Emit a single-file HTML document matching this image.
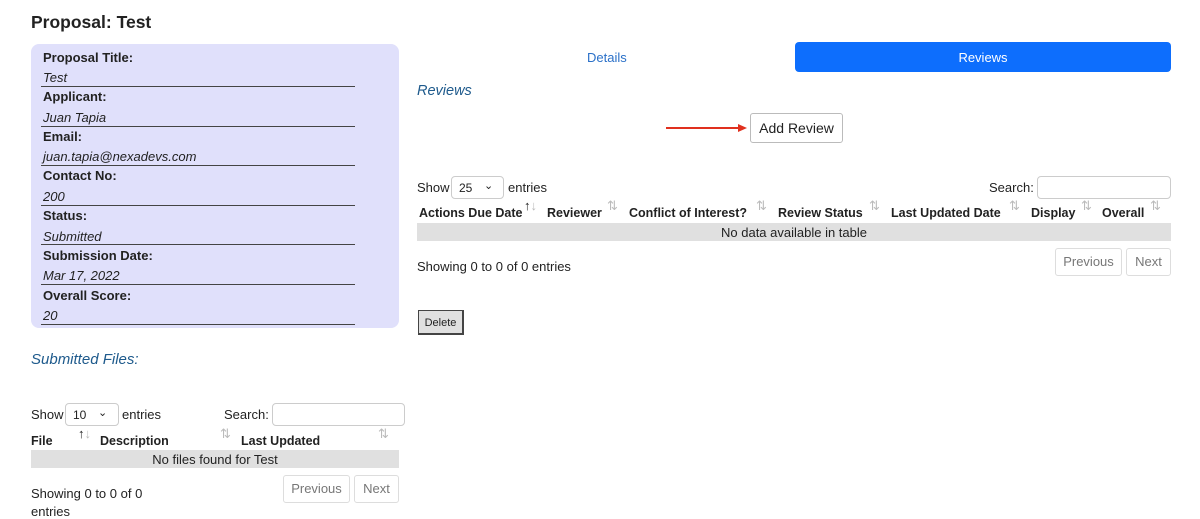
<!DOCTYPE html>
<html><head><style>
body{margin:0;width:1200px;height:514px;overflow:hidden;background:#fff;font-family:"Liberation Sans",sans-serif;color:#222;position:relative;font-size:13px}
.a{position:absolute;white-space:nowrap}
.b{font-weight:bold}
.i{font-style:italic}
.h{font-size:12.5px}
.ln{position:absolute;left:41px;width:314px;height:1px;background:#444}
.inp{position:absolute;border:1px solid #ccc;border-radius:4px;background:#fff;box-sizing:border-box}
.btn{position:absolute;border:1px solid #ddd;border-radius:3px;color:#777;box-sizing:border-box;text-align:center;background:#fff}
.s{color:#bbb;font-size:13px;position:absolute}
</style></head><body>
<div class="a b" style="left:31px;top:12px;font-size:17.5px">Proposal: Test</div>
<div style="position:absolute;left:31px;top:44px;width:368px;height:284px;background:#e0e0fb;border-radius:8px"></div>
<div class="a b" style="left:43px;top:50px">Proposal Title:</div>
<div class="a i" style="left:43px;top:70px">Test</div><div class="ln" style="top:86px"></div>
<div class="a b" style="left:43px;top:89px">Applicant:</div>
<div class="a i" style="left:43px;top:110px">Juan Tapia</div><div class="ln" style="top:126px"></div>
<div class="a b" style="left:43px;top:129px">Email:</div>
<div class="a i" style="left:43px;top:149px">juan.tapia@nexadevs.com</div><div class="ln" style="top:165px"></div>
<div class="a b" style="left:43px;top:168px">Contact No:</div>
<div class="a i" style="left:43px;top:189px">200</div><div class="ln" style="top:205px"></div>
<div class="a b" style="left:43px;top:208px">Status:</div>
<div class="a i" style="left:43px;top:229px">Submitted</div><div class="ln" style="top:244px"></div>
<div class="a b" style="left:43px;top:248px">Submission Date:</div>
<div class="a i" style="left:43px;top:268px">Mar 17, 2022</div><div class="ln" style="top:284px"></div>
<div class="a b" style="left:43px;top:288px">Overall Score:</div>
<div class="a i" style="left:43px;top:308px">20</div><div class="ln" style="top:324px"></div>

<div class="a i" style="left:31px;top:351px;font-size:15px;color:#1e5a8c">Submitted Files:</div>
<div class="a" style="left:31px;top:407px">Show</div>
<div class="inp" style="left:65px;top:403px;width:54px;height:23px"><span class="a" style="left:7px;top:4px;font-size:12px">10</span><span class="a" style="left:32px;top:2px;font-size:11px">⌄</span></div>
<div class="a" style="left:122px;top:407px">entries</div>
<div class="a" style="left:224px;top:407px">Search:</div>
<div class="inp" style="left:272px;top:403px;width:133px;height:23px"></div>
<div class="a b h" style="left:31px;top:434px">File</div>
<div class="a b h" style="left:100px;top:434px">Description</div>
<div class="a b h" style="left:241px;top:434px">Last Updated</div>
<div class="s" style="left:78px;top:426px"><b style="color:#222">↑</b>↓</div>
<div class="s" style="left:220px;top:426px">⇅</div>
<div class="s" style="left:378px;top:426px">⇅</div>
<div style="position:absolute;left:31px;top:450px;width:368px;height:18px;background:#e0e0e0"></div>
<div class="a" style="left:0;width:430px;text-align:center;top:452px">No files found for Test</div>
<div class="a" style="left:31px;top:486px">Showing 0 to 0 of 0</div>
<div class="a" style="left:31px;top:504px">entries</div>
<div class="btn" style="left:283px;top:475px;width:67px;height:28px;line-height:26px">Previous</div>
<div class="btn" style="left:354px;top:475px;width:45px;height:28px;line-height:26px">Next</div>

<div class="a" style="left:587px;top:50px;color:#2a70c8">Details</div>
<div style="position:absolute;left:795px;top:42px;width:376px;height:30px;background:#0d6efd;border-radius:4px;color:#fff;text-align:center;line-height:31px">Reviews</div>
<div class="a i" style="left:417px;top:83px;font-size:14.5px;color:#1e5a8c">Reviews</div>
<div style="position:absolute;left:666px;top:127px;width:74px;height:2px;background:#e0301e"></div>
<div style="position:absolute;left:738px;top:124px;border-left:9px solid #e0301e;border-top:4px solid transparent;border-bottom:4px solid transparent"></div>
<div class="btn" style="left:750px;top:113px;width:93px;height:30px;line-height:28px;color:#222;border-color:#bbb;font-size:14px">Add Review</div>

<div class="a" style="left:417px;top:180px">Show</div>
<div class="inp" style="left:451px;top:176px;width:53px;height:23px"><span class="a" style="left:7px;top:4px;font-size:12px">25</span><span class="a" style="left:32px;top:2px;font-size:11px">⌄</span></div>
<div class="a" style="left:508px;top:180px">entries</div>
<div class="a" style="left:989px;top:180px">Search:</div>
<div class="inp" style="left:1037px;top:176px;width:134px;height:23px"></div>
<div class="a b h" style="left:419px;top:206px">Actions Due Date</div>
<div class="s" style="left:524px;top:198px"><b style="color:#222">↑</b>↓</div>
<div class="a b h" style="left:547px;top:206px">Reviewer</div>
<div class="s" style="left:607px;top:198px">⇅</div>
<div class="a b h" style="left:629px;top:206px">Conflict of Interest?</div>
<div class="s" style="left:756px;top:198px">⇅</div>
<div class="a b h" style="left:778px;top:206px">Review Status</div>
<div class="s" style="left:869px;top:198px">⇅</div>
<div class="a b h" style="left:891px;top:206px">Last Updated Date</div>
<div class="s" style="left:1009px;top:198px">⇅</div>
<div class="a b h" style="left:1031px;top:206px">Display</div>
<div class="s" style="left:1081px;top:198px">⇅</div>
<div class="a b h" style="left:1102px;top:206px">Overall</div>
<div class="s" style="left:1150px;top:198px">⇅</div>
<div style="position:absolute;left:417px;top:223px;width:754px;height:18px;background:#e0e0e0"></div>
<div class="a" style="left:417px;width:754px;text-align:center;top:225px">No data available in table</div>
<div class="a" style="left:417px;top:259px">Showing 0 to 0 of 0 entries</div>
<div class="btn" style="left:1055px;top:248px;width:67px;height:28px;line-height:26px">Previous</div>
<div class="btn" style="left:1126px;top:248px;width:45px;height:28px;line-height:26px">Next</div>
<div style="position:absolute;left:418px;top:310px;width:46px;height:25px;box-sizing:border-box;border:1px solid #444;border-right-width:2px;border-bottom-width:2px;background:#e0e0e0;font-size:11px;text-align:center;line-height:24px">Delete</div>
</body></html>
